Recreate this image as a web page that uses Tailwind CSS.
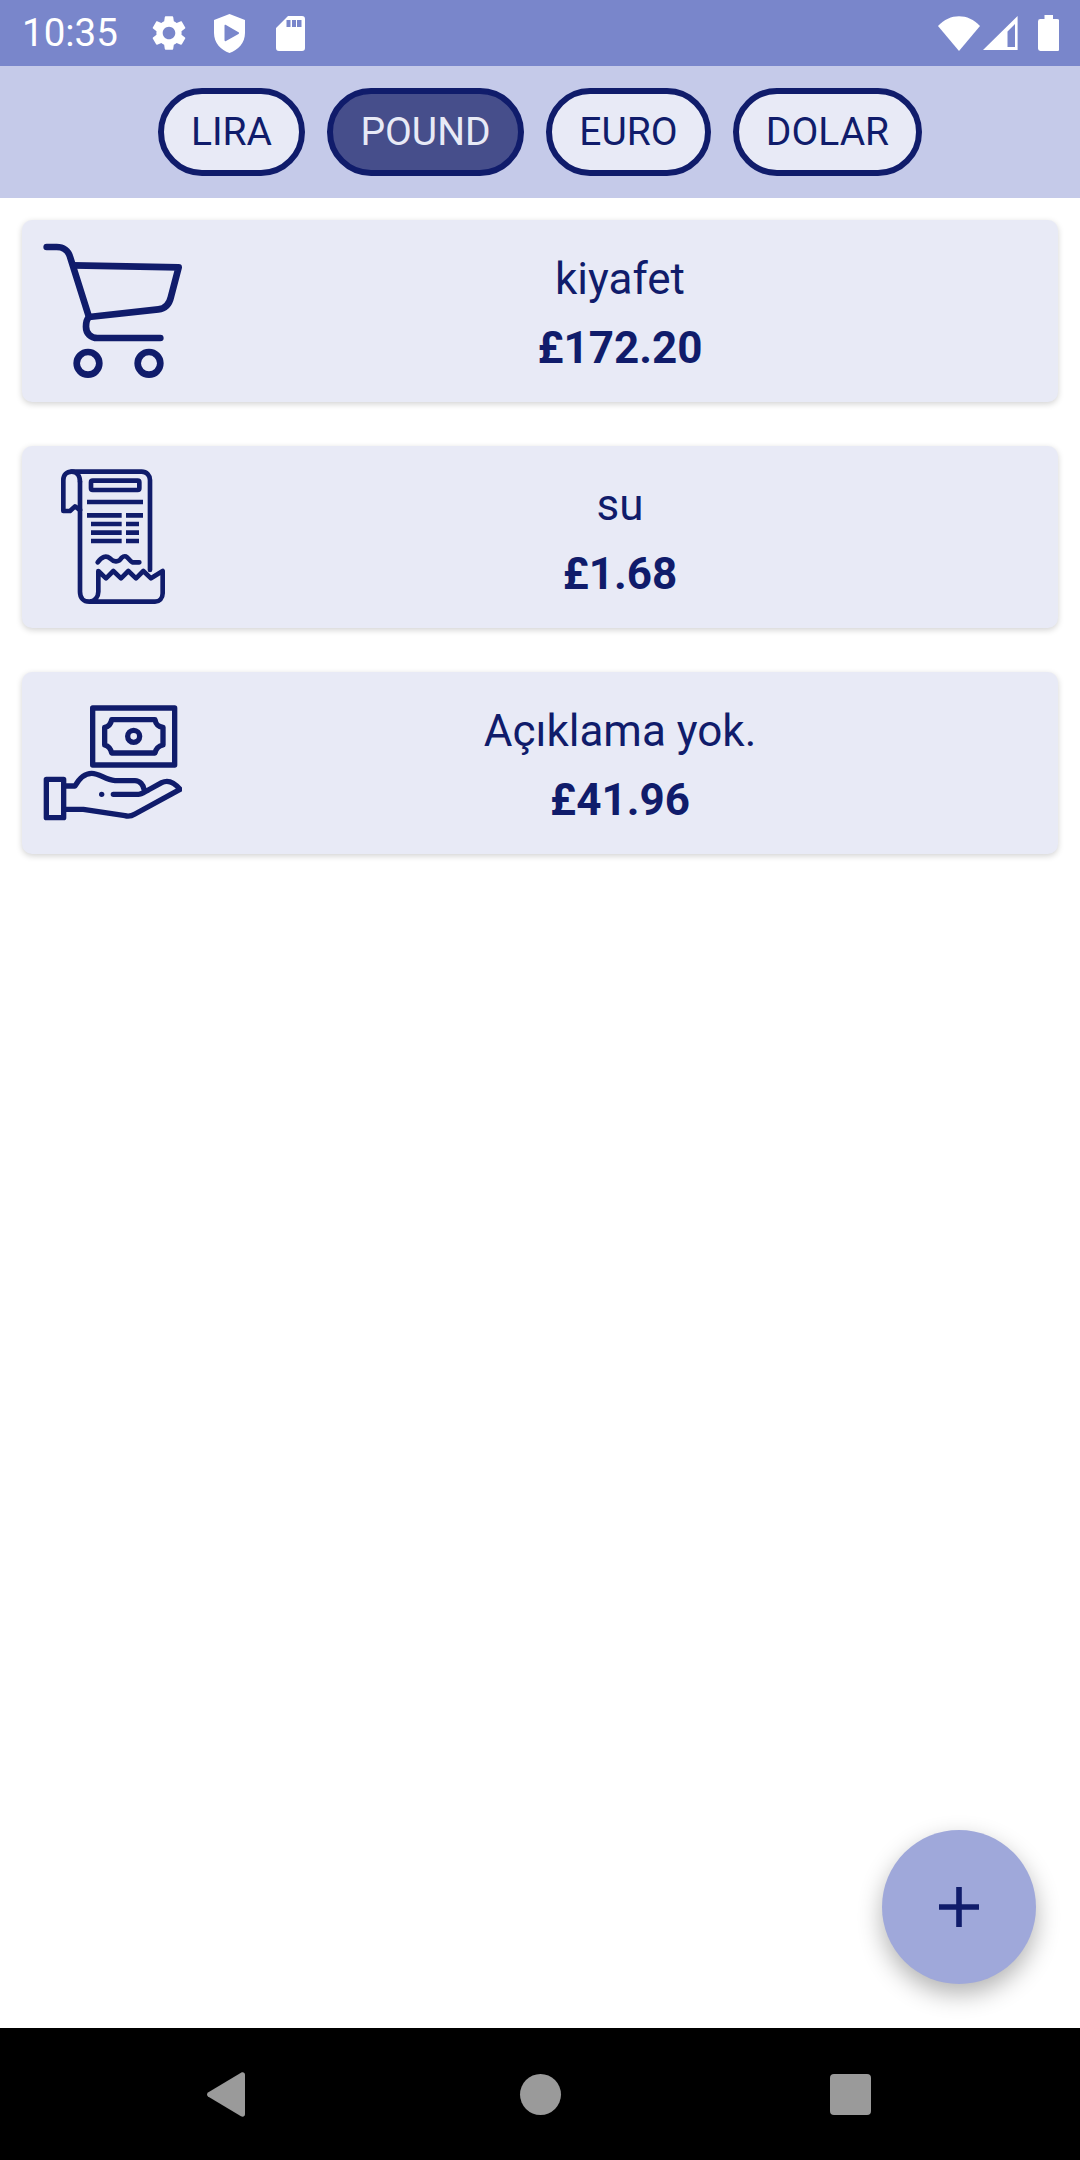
<!DOCTYPE html>
<html lang="tr">
  <head>
    <meta charset="UTF-8" />
    <meta name="viewport" content="width=device-width, initial-scale=1.0" />
    <title>Harcamalar</title>
    <script src="https://cdn.jsdelivr.net/npm/@tailwindcss/browser@4"></script>
  </head>

  <body class="bg-white">
    <div class="relative flex flex-col w-[1080px] h-[2160px] overflow-hidden font-['Roboto',sans-serif] text-[#101c6b]">
      <!-- Status bar -->
      <div class="flex items-center h-[66px] shrink-0 bg-[#7986cb] pl-[22px] text-white">
        <span class="w-[104px] text-[38.5px] leading-none">10:35</span>
        <svg class="w-[42px] h-[42px] ml-[22px]" viewBox="0 0 24 24" fill="#fff"><path d="M19.14 12.94c.04-.3.06-.61.06-.94 0-.32-.02-.64-.07-.94l2.03-1.58c.18-.14.23-.41.12-.61l-1.92-3.32c-.12-.22-.37-.29-.59-.22l-2.39.96c-.5-.38-1.03-.7-1.62-.94l-.36-2.54c-.04-.24-.24-.41-.48-.41h-3.84c-.24 0-.43.17-.47.41l-.36 2.54c-.59.24-1.13.57-1.62.94l-2.39-.96c-.22-.08-.47 0-.59.22L2.74 8.87c-.12.21-.08.47.12.61l2.03 1.58c-.05.3-.09.63-.09.94s.02.64.07.94l-2.03 1.58c-.18.14-.23.41-.12.61l1.92 3.32c.12.22.37.29.59.22l2.39-.96c.5.38 1.03.7 1.62.94l.36 2.54c.05.24.24.41.48.41h3.84c.24 0 .44-.17.47-.41l.36-2.54c.59-.24 1.13-.56 1.62-.94l2.39.96c.22.08.47 0 .59-.22l1.92-3.32c.12-.22.07-.47-.12-.61l-2.01-1.58zM12 15.6c-1.98 0-3.6-1.62-3.6-3.6s1.62-3.6 3.6-3.6 3.6 1.62 3.6 3.6-1.62 3.6-3.6 3.6z"/></svg>
        <svg class="w-[31px] h-[39px] ml-[24px]" viewBox="0 0 31 39" fill="#fff"><path fill-rule="evenodd" d="M15.5 0 L31 6 V19 C31 29 24 36 15.5 39 C7 36 0 29 0 19 V6 Z M10.5 12 V26 C10.5 27 11 27.5 12 27 L24.5 20 C25.3 19.5 25.3 18.7 24.5 18.3 L12 11 C11 10.5 10.5 11 10.5 12 Z"/></svg>
        <svg class="w-[29px] h-[35px] ml-[31px]" viewBox="0 0 29 35" fill="#fff"><path fill-rule="evenodd" d="M12 0 H26 a3 3 0 0 1 3 3 V32 a3 3 0 0 1-3 3 H3 a3 3 0 0 1-3-3 V12 Z M10.5 4 V11 H14.5 V4 Z M16 4 V11 H20 V4 Z M21 4 V11 H25.5 V4 Z"/></svg>
        <svg class="w-[42px] h-[35px] ml-auto" viewBox="0 0 42 35" fill="#fff"><path d="M0 10 C12 -3 30 -3 42 10 L21 35 Z"/></svg>
        <svg class="w-[35px] h-[34px] ml-[3px]" viewBox="0 0 35 34" fill="#fff"><path fill-rule="evenodd" d="M34.6 0 V34 H0 Z M24.5 31 H32 V8 L24.5 15.5 Z"/></svg>
        <svg class="w-[21.5px] h-[36px] ml-[20px] mr-[21px]" viewBox="0 0 21.5 36" fill="#fff"><path d="M6.5 0 H15 V4 H19 a2.4 2.4 0 0 1 2.4 2.4 V33.6 a2.4 2.4 0 0 1-2.4 2.4 H2.4 a2.4 2.4 0 0 1-2.4-2.4 V6.4 a2.4 2.4 0 0 1 2.4-2.4 H6.5 Z"/></svg>
      </div>

      <!-- Currency chips -->
      <div class="flex items-center justify-center gap-[22px] h-[132px] shrink-0 bg-[#c5cae9] text-[39px]">
        <button class="flex items-center justify-center w-[147px] h-[88px] rounded-full border-[6px] border-[#101c6b] bg-[#e8eaf6]">LIRA</button>
        <button class="flex items-center justify-center w-[197px] h-[88px] rounded-full border-[6px] border-[#101c6b] bg-[#464e8b] text-[#e8eaf6]">POUND</button>
        <button class="flex items-center justify-center w-[165px] h-[88px] rounded-full border-[6px] border-[#101c6b] bg-[#e8eaf6]">EURO</button>
        <button class="flex items-center justify-center w-[189px] h-[88px] rounded-full border-[6px] border-[#101c6b] bg-[#e8eaf6]">DOLAR</button>
      </div>

      <!-- Expense list -->
      <div class="flex flex-col gap-[44px] px-[22px] pt-[22px]">
        <div class="flex h-[182px] rounded-[10px] bg-[#e8eaf6] shadow-[0_2px_6px_rgba(0,0,0,0.18)]">
          <svg class="w-[160px] h-[182px] shrink-0" viewBox="6 0 480 546" fill="none" stroke="#101c6b" stroke-width="20" stroke-linecap="round" stroke-linejoin="round">
            <path d="M80 81 H110 C130 81 145 92 150 110 L207 291 C198 300 198 310 198 320 C198 340 212 354 232 354 H421" />
            <path d="M160 136 L476 142 L453 230 C448 252 435 266 415 268 L207 291" />
            <circle cx="204" cy="430" r="34" />
            <circle cx="387" cy="430" r="34" />
          </svg>
          <div class="flex flex-1 flex-col items-center">
            <span class="mt-[33px] text-[44px] leading-[52px]">kiyafet</span>
            <span class="mt-[17px] text-[44px] leading-[52px] font-bold">£172.20</span>
          </div>
        </div>

        <div class="flex h-[182px] rounded-[10px] bg-[#e8eaf6] shadow-[0_2px_6px_rgba(0,0,0,0.18)]">
          <svg class="w-[160px] h-[182px] shrink-0" viewBox="6 3 480 546" fill="none" stroke="#101c6b" stroke-width="14" stroke-linejoin="round" stroke-linecap="round">
            <path d="M155 80 H365 C380 80 390 92 390 105 V375" />
            <path d="M180 110 V440 C180 458 190 470 208 470 C225 470 235 455 235 440 V378 L258 400 L280 378 L303 400 L325 378 L348 400 L370 378 L393 400 L428 378 V445 C428 460 418 470 405 470 H208" />
            <path d="M180 195 L165 184 L150 198 L130 198 V105 C130 90 140 80 155 80 C170 80 180 92 180 110" />
            <rect x="213" y="107" width="145" height="28" rx="5" />
            <path d="M233 352 C245 335 258 330 270 340 C280 350 295 355 305 338 C320 325 325 345 337 352 H358" />
            <path stroke-linecap="butt" stroke-width="14" d="M201 171 H369 M201 211 H305 M318 211 H369 M213 237 H305 M318 237 H357 M213 263 H305 M318 263 H357 M213 288 H305 M318 288 H357" />
          </svg>
          <div class="flex flex-1 flex-col items-center">
            <span class="mt-[33px] text-[44px] leading-[52px]">su</span>
            <span class="mt-[17px] text-[44px] leading-[52px] font-bold">£1.68</span>
          </div>
        </div>

        <div class="flex h-[182px] rounded-[10px] bg-[#e8eaf6] shadow-[0_2px_6px_rgba(0,0,0,0.18)]">
          <svg class="w-[160px] h-[182px] shrink-0" viewBox="6 6 480 546" fill="none" stroke="#101c6b" stroke-width="16" stroke-linejoin="round" stroke-linecap="round">
            <rect x="218" y="114" width="246" height="171" />
            <path d="M275 149 H405 C408 165 415 170 429 172 V225 C415 228 408 235 405 249 H275 C272 235 265 228 254 225 V172 C265 170 272 165 275 149 Z" />
            <circle cx="341" cy="199" r="18" />
            <rect x="79" y="328" width="52" height="115" />
            <path d="M135 348 H165 C175 330 190 310 215 310 C240 310 255 330 285 332 H345 C360 332 370 345 372 358" />
            <path d="M280 373 H355 C365 373 375 365 385 360 L425 338 C445 328 465 340 480 358 L345 432 C335 438 325 440 315 437 L190 418 H135" />
            <circle cx="245" cy="373" r="8" fill="#101c6b" stroke="none" />
          </svg>
          <div class="flex flex-1 flex-col items-center">
            <span class="mt-[33px] text-[44px] leading-[52px]">Açıklama yok.</span>
            <span class="mt-[17px] text-[44px] leading-[52px] font-bold">£41.96</span>
          </div>
        </div>
      </div>

      <!-- Navigation bar -->
      <div class="flex items-center h-[132px] mt-auto shrink-0 bg-black pl-[207px]">
        <svg class="w-[38px] h-[45px]" viewBox="0 0 38 45" fill="#9a9a9a"><path d="M1 20.5 L34 0.7 C36 -0.2 38 0.5 38 3 V42 C38 44.5 36 45.2 34 44.3 L1 24.5 C-0.3 23.5 -0.3 21.5 1 20.5 Z"/></svg>
        <div class="w-[41px] h-[41px] ml-[275px] rounded-full bg-[#9a9a9a]"></div>
        <div class="w-[41px] h-[41px] ml-[269px] rounded-[4px] bg-[#9a9a9a]"></div>
      </div>

      <!-- FAB -->
      <button class="absolute right-[44px] bottom-[176px] flex items-center justify-center w-[154px] h-[154px] rounded-full bg-[#9fa8da] shadow-[0_10px_24px_rgba(0,0,0,0.3)]">
        <svg class="w-[40px] h-[40px]" viewBox="0 0 40 40" fill="#101c6b"><path d="M17.2 0 H22.8 V17.2 H40 V22.8 H22.8 V40 H17.2 V22.8 H0 V17.2 H17.2 Z"/></svg>
      </button>
    </div>
  </body>
</html>
